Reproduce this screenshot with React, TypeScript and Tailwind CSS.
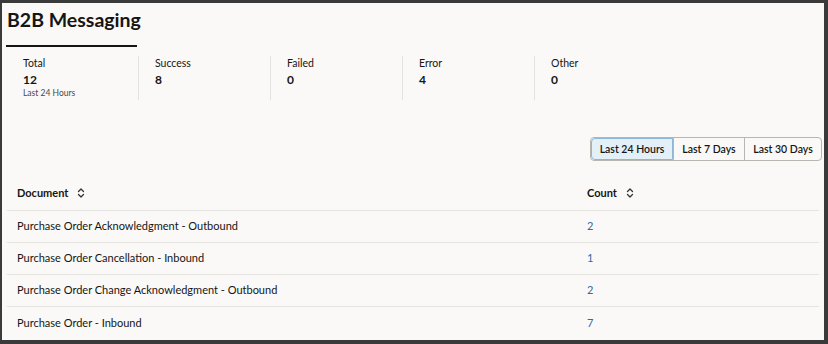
import React, { useState } from "react";

const stats = [
  { label: "Total", value: "12", note: "Last 24 Hours" },
  { label: "Success", value: "8" },
  { label: "Failed", value: "0" },
  { label: "Error", value: "4" },
  { label: "Other", value: "0" },
];

const rows = [
  { doc: "Purchase Order Acknowledgment - Outbound", count: 2 },
  { doc: "Purchase Order Cancellation - Inbound", count: 1 },
  { doc: "Purchase Order Change Acknowledgment - Outbound", count: 2 },
  { doc: "Purchase Order - Inbound", count: 7 },
];

const ranges = [
  { label: "Last 24 Hours", w: "w-[82px]" },
  { label: "Last 7 Days", w: "w-[71px]" },
  { label: "Last 30 Days", w: "w-[77px]" },
];

const SortIcon = () => (
  <svg width="10" height="12" viewBox="0 0 10 12" fill="none" stroke="#333" strokeWidth="1.3" strokeLinecap="round" strokeLinejoin="round">
    <path d="M2.5 4.5 5 2l2.5 2.5" />
    <path d="M2.5 7.5 5 10l2.5-2.5" />
  </svg>
);

export default function App() {
  const [range, setRange] = useState("Last 24 Hours");

  return (
    <div
      className="w-[828px] h-[344px] bg-[#faf9f7] border-l-2 border-t-[3px] border-r-4 border-b-4 border-[#3a3a3a] text-[#161513] overflow-hidden"
      style={{ fontFamily: "Lato, 'Noto Sans', sans-serif" }}
    >
      {/* Header */}
      <h1 className="pl-[5px] pt-[3px] text-[19.5px] font-bold leading-[28px]">B2B Messaging</h1>
      <div className="ml-[4px] mt-[11px] w-[131px] h-[2px] bg-[#161513]" />

      {/* Stats */}
      <div className="flex mt-[9px] ml-[5px]">
        {stats.map((s, i) => (
          <div
            key={s.label}
            className={`w-[132px] h-[44px] pl-[16px] ${i < stats.length - 1 ? "border-r border-[#e4e2de]" : ""}`}
          >
            <div className="text-[10.5px] leading-[14px]">{s.label}</div>
            <div className="text-[12px] font-bold leading-[14px] mt-[3px]">{s.value}</div>
            {s.note && <div className="text-[8.5px] leading-[11px] text-[#4a4946] mt-[1px]">{s.note}</div>}
          </div>
        ))}
      </div>

      {/* Range selector */}
      <div className="flex justify-end pr-[2px] mt-[37px]">
        <div className="flex h-[24px] rounded-[4px] border border-[#b8b6b1] overflow-hidden">
          {ranges.map((r, i) => (
            <button
              key={r.label}
              onClick={() => setRange(r.label)}
              className={`${r.w} text-[10.5px] font-semibold leading-none ${i > 0 ? "border-l border-[#b8b6b1]" : ""} ${
                range === r.label ? "bg-[#e4f0f8] outline outline-1 outline-[#8fb6d4] -outline-offset-1 rounded-l-[4px]" : ""
              }`}
            >
              {r.label}
            </button>
          ))}
        </div>
      </div>

      {/* Table */}
      <div className="mx-[5px] mt-[15px]">
        <div className="flex items-center h-[35px] border-b border-[#e6e4e0] text-[11px] font-bold">
          <div className="w-[580px] pl-[10px] flex items-center gap-[8px]">
            Document <SortIcon />
          </div>
          <div className="flex items-center gap-[8px]">
            Count <SortIcon />
          </div>
        </div>
        {rows.map((r, i) => (
          <div
            key={r.doc}
            className={`flex items-center h-[32px] text-[11px] ${i < rows.length - 1 ? "border-b border-[#e6e4e0]" : ""}`}
          >
            <div className="w-[580px] pl-[10px]">{r.doc}</div>
            <div className="text-[#2a6ea6]">{r.count}</div>
          </div>
        ))}
      </div>
    </div>
  );
}
